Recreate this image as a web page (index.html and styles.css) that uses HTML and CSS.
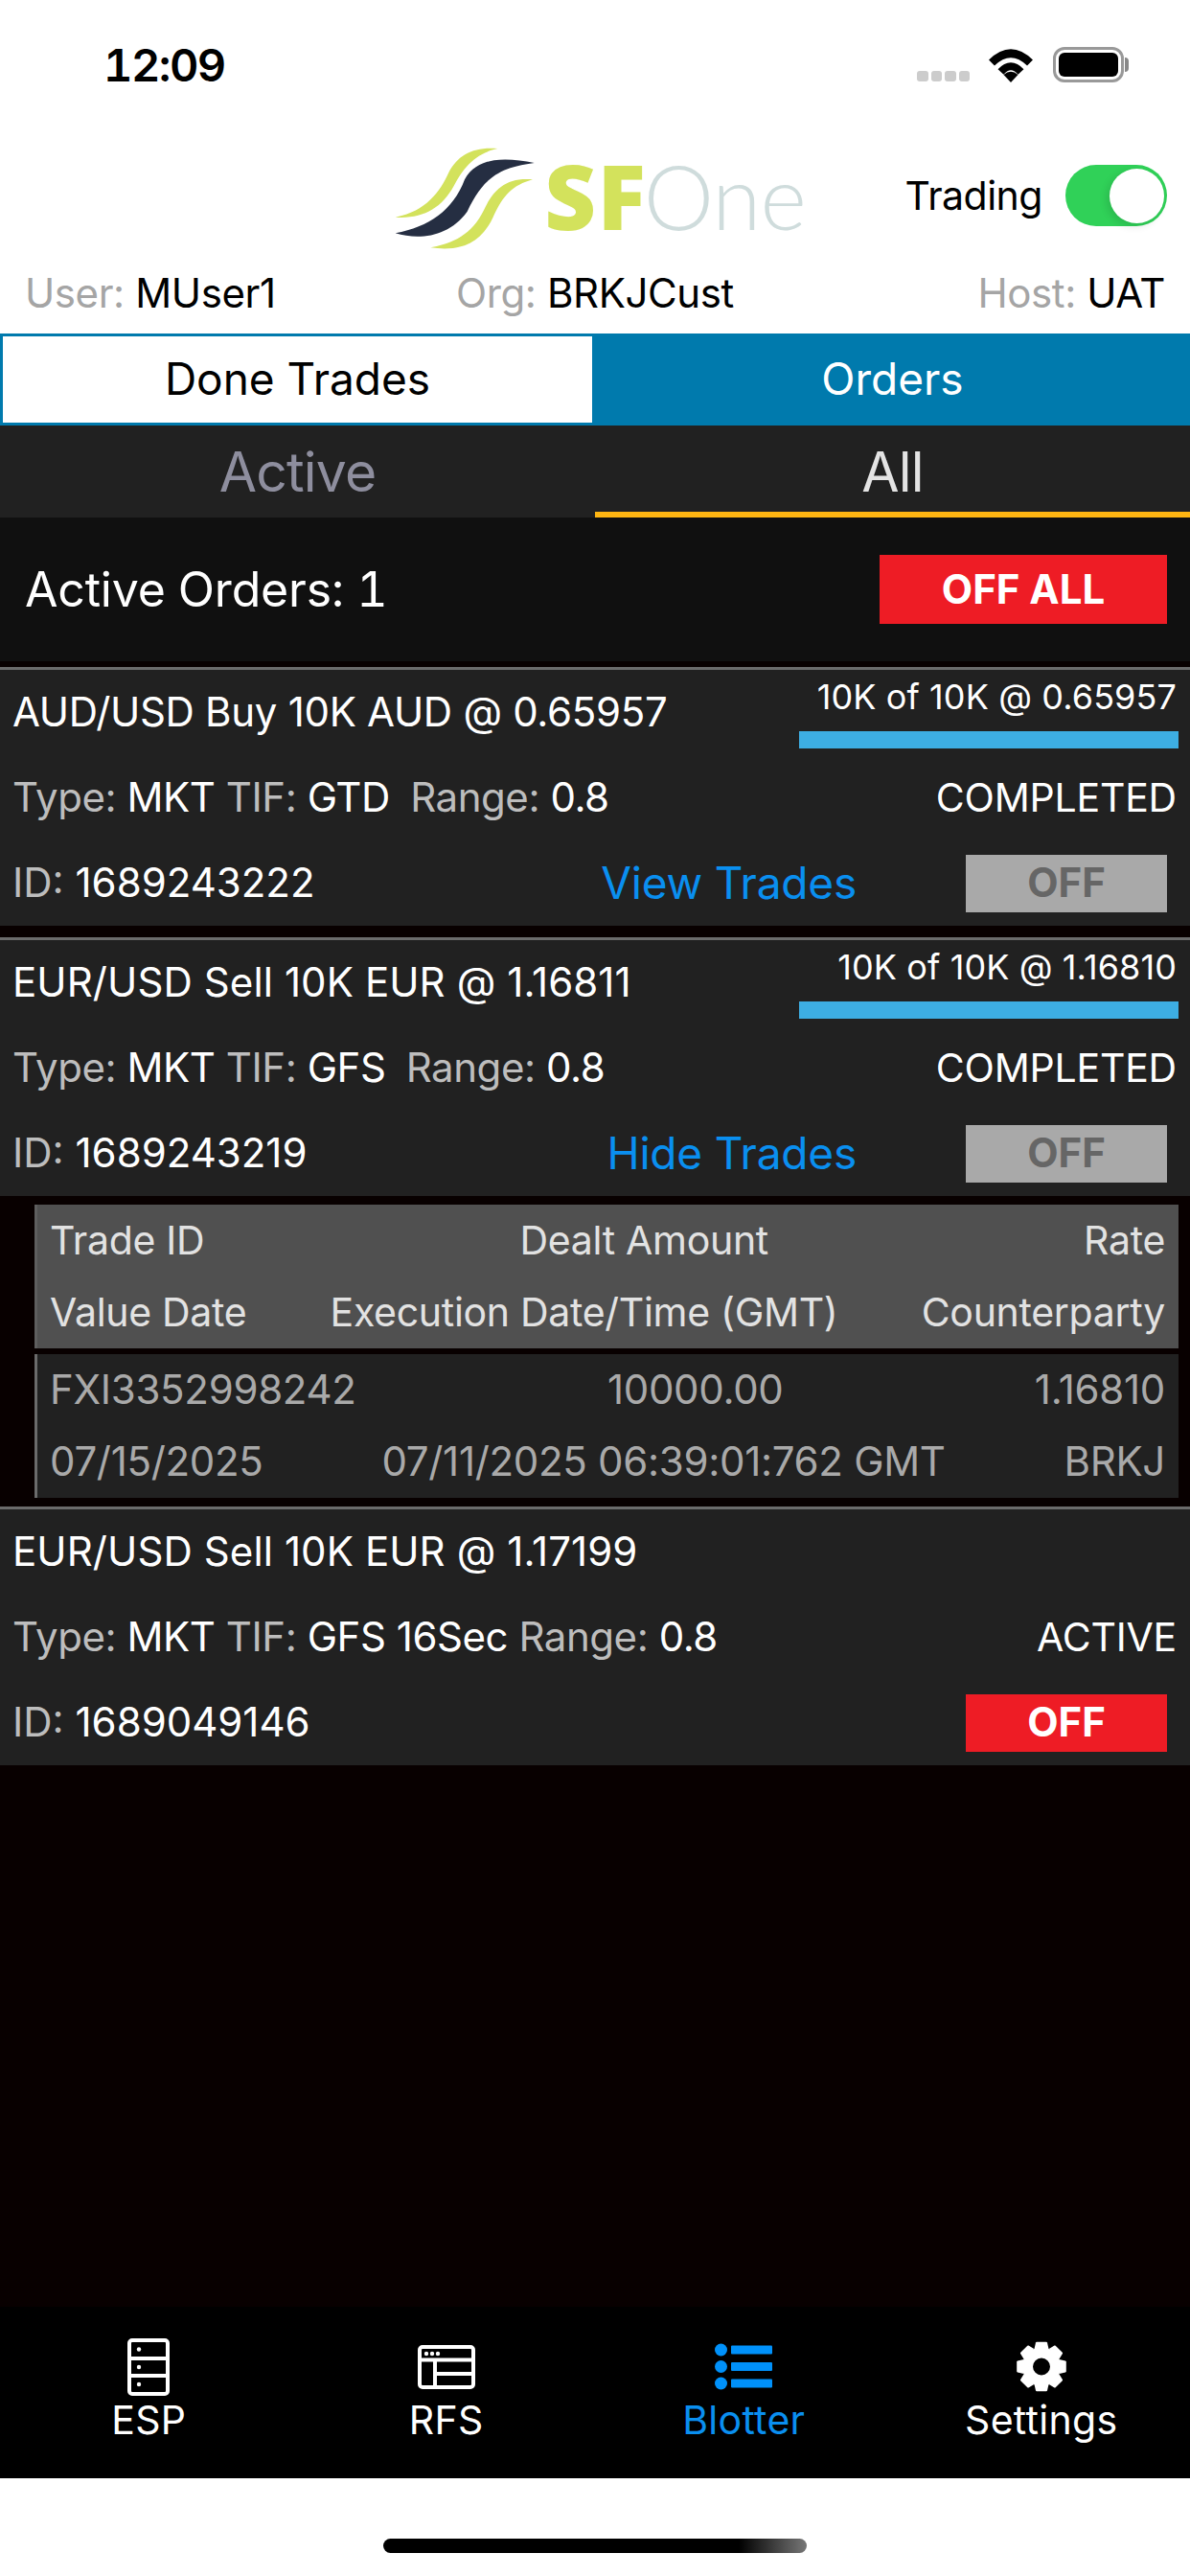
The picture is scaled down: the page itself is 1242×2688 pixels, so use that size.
FILE: index.html
```html
<!DOCTYPE html>
<html lang="en">
<head>
<meta charset="utf-8">
<title>SFOne Blotter</title>
<link rel="stylesheet" href="styles.css">
</head>
<body>
<div class="app">
  <div class="status">
    <div class="time">12:09</div>
    <div class="status-icons">
      <div class="signal"><i></i><i></i><i></i><i></i></div>
      <svg class="wifi" width="48" height="37" viewBox="0 0 48 37"><path d="M24 37 L16.5 29 Q24 22.5 31.5 29 Z" fill="#000"/><path d="M13.5 26 Q24 14.5 34.5 26" class="wifi-arc"/><path d="M4 16.5 Q24 -3 44 16.5" class="wifi-arc wifi-outer"/></svg>
      <div class="battery"><div class="battery-fill"></div></div>
      <div class="battery-nub"></div>
    </div>
  </div>
  <div class="header">
    <div></div>
    <svg class="logo" width="480" height="140" viewBox="0 0 1440 420">
      <path class="logo-green" d="M415 75 C340 68 290 95 262 150 C235 210 190 272 95 290 C180 296 240 262 278 192 C308 135 345 90 415 75 Z"/>
      <path class="logo-navy" d="M530 120 C440 102 350 100 312 172 C275 270 200 320 95 340 C170 362 262 352 320 272 C368 175 410 135 530 120 Z"/>
      <path class="logo-green" d="M525 172 C450 165 405 195 372 268 C335 345 275 372 205 385 C300 398 362 372 400 292 C432 220 462 190 525 172 Z"/>
      <text class="logo-sf" x="562" y="331">SF</text>
      <text class="logo-one" x="872" y="331">One</text>
    </svg>
    <div class="trading">
      <span>Trading</span>
      <div class="toggle"><div class="knob"></div></div>
    </div>
  </div>
  <div class="info">
    <div><span class="muted">User:</span> MUser1</div>
    <div><span class="muted">Org:</span> BRKJCust</div>
    <div class="info-right"><span class="muted">Host:</span> UAT</div>
  </div>
  <div class="tabs">
    <div class="tab tab-on">Done Trades</div>
    <div class="tab">Orders</div>
  </div>
  <div class="subtabs">
    <div class="subtab">Active</div>
    <div class="subtab subtab-on">All</div>
  </div>
  <div class="summary">
    <div class="summary-text">Active Orders: 1</div>
    <div class="btn btn-all">OFF ALL</div>
  </div>
  <div class="content">
    <div class="card">
      <div class="row">
        <div class="title">AUD/USD Buy 10K AUD @ 0.65957</div>
        <div class="progress"><div class="fill-text">10K of 10K @ 0.65957</div><div class="bar"></div></div>
      </div>
      <div class="row">
        <div class="meta"><span class="dim">Type:</span> MKT <span class="dim">TIF:</span> GTD <span class="dim range">Range:</span> 0.8</div>
        <div class="state">COMPLETED</div>
      </div>
      <div class="row">
        <div class="order-id"><span class="dim">ID:</span> 1689243222</div>
        <div class="link">View Trades</div>
        <div class="btn btn-off">OFF</div>
      </div>
    </div>
    <div class="card card-next">
      <div class="row">
        <div class="title title-sell">EUR/USD Sell 10K EUR @ 1.16811</div>
        <div class="progress"><div class="fill-text">10K of 10K @ 1.16810</div><div class="bar"></div></div>
      </div>
      <div class="row">
        <div class="meta"><span class="dim">Type:</span> MKT <span class="dim">TIF:</span> GFS <span class="dim range">Range:</span> 0.8</div>
        <div class="state">COMPLETED</div>
      </div>
      <div class="row">
        <div class="order-id"><span class="dim">ID:</span> 1689243219</div>
        <div class="link">Hide Trades</div>
        <div class="btn btn-off">OFF</div>
      </div>
    </div>
    <div class="trades">
      <div class="trades-panel trades-head">
        <div class="trades-row"><span>Trade ID</span><span>Dealt Amount</span><span>Rate</span></div>
        <div class="trades-row"><span>Value Date</span><span>Execution Date/Time (GMT)</span><span>Counterparty</span></div>
      </div>
      <div class="trades-panel trades-body">
        <div class="trades-row"><span>FXI3352998242</span><span>10000.00</span><span>1.16810</span></div>
        <div class="trades-row"><span>07/15/2025</span><span>07/11/2025 06:39:01:762 GMT</span><span>BRKJ</span></div>
      </div>
    </div>
    <div class="card card-last">
      <div class="row">
        <div class="title title-sell">EUR/USD Sell 10K EUR @ 1.17199</div>
      </div>
      <div class="row">
        <div class="meta"><span class="dim">Type:</span> MKT <span class="dim">TIF:</span> GFS 16Sec <span class="dim">Range:</span> 0.8</div>
        <div class="state">ACTIVE</div>
      </div>
      <div class="row">
        <div class="order-id"><span class="dim">ID:</span> 1689049146</div>
        <div class="btn btn-live">OFF</div>
      </div>
    </div>
  </div>
  <div class="tabbar">
    <div class="nav">
      <svg class="nav-icon" width="60" height="66" viewBox="0 0 60 66" fill="none">
        <rect x="10" y="5" width="40" height="56" rx="3" class="ln"/>
        <path d="M10 24H50M10 42H50" class="ln"/>
        <circle cx="20" cy="14.500" r="2.200" class="dot"/><circle cx="20" cy="33" r="2.200" class="dot"/><circle cx="20" cy="51" r="2.200" class="dot"/>
      </svg>
      <span>ESP</span>
    </div>
    <div class="nav">
      <svg class="nav-icon" width="60" height="66" viewBox="0 0 60 66" fill="none">
        <rect x="2" y="12" width="56" height="42" rx="3" class="ln"/>
        <path d="M2 25.500H58M18 25.500V54M18 40H58" class="ln"/>
        <circle cx="9" cy="19" r="2.200" class="dot"/><circle cx="15" cy="19" r="2.200" class="dot"/><circle cx="21" cy="19" r="2.200" class="dot"/>
      </svg>
      <span>RFS</span>
    </div>
    <div class="nav nav-on">
      <svg class="nav-icon" width="60" height="66" viewBox="0 0 60 66">
        <circle cx="6.500" cy="15" r="6.500" class="blue"/><circle cx="6.500" cy="32.500" r="6.500" class="blue"/><circle cx="6.500" cy="50" r="6.500" class="blue"/>
        <rect x="17" y="10.500" width="43" height="9" rx="1" class="blue"/><rect x="17" y="28" width="43" height="9" rx="1" class="blue"/><rect x="17" y="45.500" width="43" height="9" rx="1" class="blue"/>
      </svg>
      <span>Blotter</span>
    </div>
    <div class="nav">
      <svg class="nav-icon" width="60" height="66" viewBox="0 0 60 66">
        <defs><path id="tooth" d="M22.500 14 L24 7.500 Q24.300 6.700 25 6.700 H35 Q35.700 6.700 36 7.500 L37.500 14 Z" fill="#fff"/></defs>
        <use href="#tooth"/>
        <use href="#tooth" transform="rotate(45 30 32.500)"/>
        <use href="#tooth" transform="rotate(90 30 32.500)"/>
        <use href="#tooth" transform="rotate(135 30 32.500)"/>
        <use href="#tooth" transform="rotate(180 30 32.500)"/>
        <use href="#tooth" transform="rotate(225 30 32.500)"/>
        <use href="#tooth" transform="rotate(270 30 32.500)"/>
        <use href="#tooth" transform="rotate(315 30 32.500)"/>
        <circle cx="30" cy="32.500" r="14.500" fill="none" stroke="#fff" stroke-width="11"/>
      </svg>
      <span>Settings</span>
    </div>
  </div>
  <div class="home"><div class="home-bar"></div></div>
</div>
</body>
</html>
```
FILE: styles.css
```css
* { box-sizing: border-box; }
html, body { margin: 0; padding: 0; background: #fff; }
body { font-family: Inter, "Liberation Sans", sans-serif; color: #000; }
.app { width: 1242px; height: 2688px; display: flex; flex-direction: column; overflow: hidden; }

.status { height: 130px; display: flex; justify-content: space-between; align-items: flex-start; padding: 44px 64px 0 108px; }
.time { font-size: 47px; line-height: 47px; font-weight: 600; letter-spacing: -1.5px; font-variant-numeric: tabular-nums; }
.status-icons { display: flex; align-items: flex-end; height: 42px; }
.signal { display: flex; gap: 3px; margin: 0 19px 1px 0; }
.signal i { width: 11.500px; height: 11px; border-radius: 3px; background: #ccc; }
.wifi { margin-right: 20px; }
.wifi-arc { fill: none; stroke: #000; stroke-width: 8; }
.wifi-outer { stroke-width: 8.500; }
.battery { width: 74px; height: 37px; border: 3px solid #999; border-radius: 12px; padding: 3px; }
.battery-fill { height: 100%; background: #000; border-radius: 6px; }
.battery-nub { width: 4px; height: 15px; margin: 0 0 11px 1px; background: #888; border-radius: 0 4px 4px 0; }

.header { height: 140px; display: grid; grid-template-columns: 1fr auto 1fr; align-items: center; }
.logo { display: block; filter: blur(0.7px); }
.logo-green { fill: #d3e25c; }
.logo-navy { fill: #252e42; }
.logo-sf { font-family: "Open Sans", sans-serif; font-size: 280px; font-weight: 800; fill: #d3e25c; letter-spacing: 4px; }
.logo-one { font-family: Lato, sans-serif; font-size: 278px; font-weight: 300; fill: #cfdcdc; letter-spacing: -2px; }
.trading { display: flex; justify-content: flex-end; align-items: center; gap: 24px; padding: 8px 24px 0 0; font-size: 41px; letter-spacing: -0.5px; }
.toggle { width: 106px; height: 64px; border-radius: 32px; background: #30d158; display: flex; justify-content: flex-end; align-items: center; padding-right: 3px; }
.knob { width: 57px; height: 57px; border-radius: 50%; background: #fff; box-shadow: -3px 3px 8px rgba(0,0,0,0.12); }

.info { height: 78px; padding: 0 26px 8px; display: grid; grid-template-columns: 1fr auto 1fr; align-items: center; font-size: 42px; letter-spacing: -0.4px; }
.info-right { text-align: right; }
.muted { color: #a5a5a5; }

.tabs { display: grid; grid-template-columns: 1fr 1fr; height: 96px; }
.tab { border: 3px solid #007aad; background: #007aad; color: #fff; display: flex; justify-content: center; align-items: center; font-size: 46px; padding-bottom: 2px; }
.tab-on { background: #fff; color: #000; }

.subtabs { display: grid; grid-template-columns: 1fr 1fr; height: 96px; background: #212121; }
.subtab { display: flex; justify-content: center; align-items: center; font-size: 57px; letter-spacing: -0.8px; color: #8e8e9e; }
.subtab-on { color: #e4e4e4; box-shadow: inset 0 -6px 0 #ffb612; }

.summary { height: 150px; background: #101010; display: flex; justify-content: space-between; align-items: center; padding: 0 24px 0 26px; }
.summary-text { color: #fff; font-size: 50px; letter-spacing: -0.2px; font-variant-numeric: tabular-nums; }
.btn { display: flex; justify-content: center; align-items: center; font-weight: 700; color: #fff; font-size: 42px; padding-bottom: 2px; }
.btn-all { width: 300px; height: 72px; background: #ee1c25; }

.content { flex: 1; background: #080000; padding-top: 6px; }
.card { height: 270px; border-top: 3px solid #6b6b6b; background: #212121; color: #fff; }
.card-next { margin-top: 12px; }
.card-last { margin-top: 9px; }
.row { height: 89px; display: flex; justify-content: space-between; align-items: center; padding: 0 14px 0 13px; }
.title { font-size: 42px; letter-spacing: -0.3px; margin-bottom: 2px; }
.title-sell { letter-spacing: 0.1px; }
.progress { width: 396px; margin-right: -2px; align-self: flex-start; padding-top: 6px; }
.fill-text { height: 44px; line-height: 44px; font-size: 36px; letter-spacing: 0.1px; text-align: right; padding-right: 2px; }
.bar { height: 18px; margin-top: 14px; background: #3daee3; }
.meta { font-size: 42px; letter-spacing: -0.45px; margin-bottom: 2px; }
.order-id { flex: 1; font-size: 42px; margin-bottom: 2px; }
.dim { color: #bdbdbd; }
.range { margin-left: 10px; }
.state { font-size: 41px; letter-spacing: -0.2px; margin-bottom: 2px; }
.link { color: #0a8ff0; font-size: 46px; letter-spacing: -0.2px; margin: 0 114px 2px 0; }
.btn-off { width: 210px; height: 60px; margin-right: 10px; background: #a9a9a9; color: #666; }
.btn-live { width: 210px; height: 60px; margin-right: 10px; background: #ee1c25; }

.trades { padding: 9px 12px 0 36px; }
.trades-panel { height: 150px; border-left: 3px solid #6b6b6b; }
.trades-head { background: #505050; color: #e2e2e2; border-left-color: #5e5e5e; font-size: 41px; }
.trades-body { margin-top: 6px; background: #212121; color: #a9a9a9; font-size: 42px; }
.trades-row { height: 75px; display: flex; justify-content: space-between; align-items: center; padding: 0 14px 2px 13px; letter-spacing: -0.3px; }

.tabbar { height: 179px; background: #000; display: grid; grid-template-columns: repeat(4, 1fr); padding-top: 30px; }
.nav { display: flex; flex-direction: column; align-items: center; color: #fff; font-size: 41px; letter-spacing: 0.3px; line-height: 48px; }
.nav-on { color: #0a8ff0; }
.nav-icon { display: block; margin-bottom: -2px; }
.ln { stroke: #fff; stroke-width: 4; fill: none; }
.dot { fill: #fff; }
.blue { fill: #0091fa; }

.home { height: 102px; background: #fff; display: flex; justify-content: center; padding-top: 63px; }
.home-bar { width: 442px; height: 15px; border-radius: 8px; background: linear-gradient(90deg, #000 84%, #777 100%); }
```
